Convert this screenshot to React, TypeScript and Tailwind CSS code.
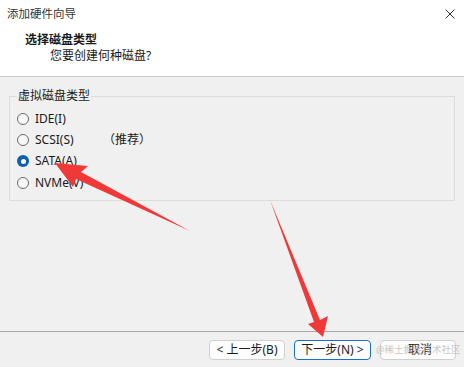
const font = "font-['Noto_Sans','Noto_Sans_CJK_SC',sans-serif]"

const options = [
  { label: "IDE(I)", note: "" },
  { label: "SCSI(S)", note: "（推荐）" },
  { label: "SATA(A)", note: "" },
  { label: "NVMe(V)", note: "" },
]

const Radio = ({ checked }: { checked: boolean }) =>
  checked ? (
    <span className="w-[12px] h-[12px] rounded-full bg-[#0a5fb4] flex items-center justify-center">
      <span className="w-[5px] h-[5px] rounded-full bg-white" />
    </span>
  ) : (
    <span className="w-[12px] h-[12px] rounded-full border border-[#6b6b6b] bg-[#f7f7f7]" />
  )

const App = () => {
  return (
    <div className={`relative w-[464px] h-[367px] bg-[#f0f0f0] overflow-hidden text-[#1a1a1a] ${font}`}>
      <div className="h-[77px] bg-white border-b border-[#c9c9c9] flex flex-col">
        <div className="h-[27px] flex items-center justify-between pl-[7px] pr-[8px] text-[11.5px] text-[#333]">
          <span>添加硬件向导</span>
          <svg width="12" height="12" viewBox="0 0 12 12" className="mt-[1px]">
            <path d="M1.5 1.5 L10.5 10.5 M10.5 1.5 L1.5 10.5" stroke="#333" strokeWidth="1" />
          </svg>
        </div>
        <div className="pl-[25px] pt-[5px] text-[12px] leading-[16px]">
          <div className="font-bold">选择磁盘类型</div>
          <div className="pl-[25px]">您要创建何种磁盘?</div>
        </div>
      </div>

      <fieldset className="mx-[9px] mt-[11px] h-[113px] border border-[#dcdcdc] px-[7px]">
        <legend className="text-[12px] leading-[16px] px-[1px]">虚拟磁盘类型</legend>
        <div className="flex flex-col pt-[4px]">
          {options.map((o, i) => (
            <div key={o.label} className="h-[21.3px] flex items-center gap-[6px] text-[12px]">
              <Radio checked={i === 2} />
              <span className="w-[62px]">{o.label}</span>
              <span>{o.note}</span>
            </div>
          ))}
        </div>
      </fieldset>

      <div className="absolute left-0 right-0 top-[331px] border-t border-[#a5a5a5]" />
      <div className="absolute left-0 right-0 top-[340px] flex justify-end gap-[9px] pr-[8px] text-[12px]">
        <button className="w-[76px] h-[20px] bg-[#fdfdfd] border border-[#d0d0d0] rounded-[4px]">&lt; 上一步(B)</button>
        <button className="w-[77px] h-[20px] bg-[#fdfdfd] border border-[#1b6fc4] rounded-[4px]">下一步(N) &gt;</button>
        <button className="w-[76px] h-[20px] bg-[#fdfdfd] border border-[#d0d0d0] rounded-[4px] pl-[4px]">取消</button>
      </div>
      <div className="absolute left-[376px] top-[343px] text-[9.5px] leading-[14px] text-[#b8b8b8]/80 whitespace-nowrap pointer-events-none">@稀土掘金技术社区</div>

      <svg className="absolute inset-0" width="464" height="367" viewBox="0 0 464 367">
        <polygon points="55,163 88,166 81,172 190,231 76,179 73,187" fill="#f03838" />
        <polygon points="323,337 308,324 314,322 270,200 320,320 328,316" fill="#f03838" />
      </svg>
    </div>
  )
}

export default App
